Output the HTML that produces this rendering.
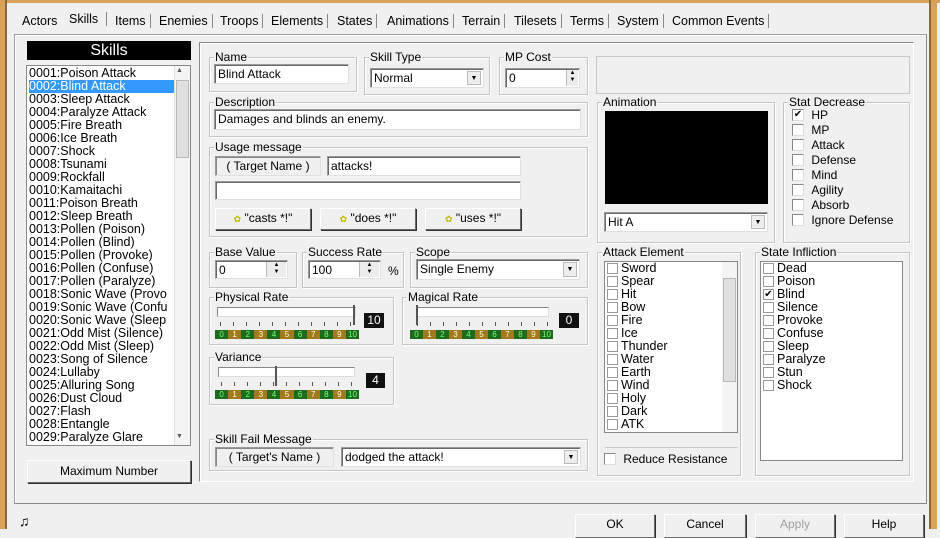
<!DOCTYPE html>
<html><head><meta charset="utf-8">
<style>
*{box-sizing:border-box;margin:0;padding:0}
body{width:940px;height:529px;overflow:hidden;background:#f0f0f0;font-family:"Liberation Sans","DejaVu Sans",sans-serif;font-size:12px;color:#000;position:relative}
.a{position:absolute}
.grp{position:absolute;border:1px solid #c4c4c4;box-shadow:inset 1px 1px 0 #fff,1px 1px 0 #fff}
.lg{position:absolute;top:-8px;left:4px;background:#f0f0f0;padding:0 1px;line-height:14px;font-size:12px}
.inp{position:absolute;background:#fff;border:1px solid #9a9a9a;border-right-color:#e0e0e0;border-bottom-color:#e0e0e0;box-shadow:inset 1px 1px 0 #696969;padding:1px 3px;line-height:16px;white-space:nowrap;overflow:hidden}
.btn{position:absolute;background:#f0f0f0;border:1px solid #fff;border-right-color:#696969;border-bottom-color:#696969;box-shadow:1px 1px 0 #333;text-align:center;line-height:19px}
.dd{position:absolute;right:2px;top:2px;bottom:2px;width:14px;background:#eee;border:1px solid #bbb;font-size:7px;text-align:center;line-height:13px}
.lst div{height:13px;line-height:13px;white-space:nowrap}
.cb{display:inline-block;width:11px;height:11px;border:1px solid #999;background:#fff;vertical-align:top;margin-top:1px;margin-right:3px;font-size:10px;line-height:9px;text-align:center;overflow:hidden}
.cb2{position:absolute;left:0;width:12px;height:12px;border:1px solid #888;border-right-color:#ddd;border-bottom-color:#ddd;background:#fff;font-size:10px;line-height:10px;text-align:center;overflow:hidden}
.sd div{position:relative;height:15px;line-height:15px;padding-left:16px}
.sd .cb2{top:1px}
.track{position:absolute;height:10px;background:#fff;border:1px solid #888;border-right-color:#ddd;border-bottom-color:#ddd}
.strip{position:absolute;height:9px;display:flex}
.strip span{flex:1;font-size:8px;line-height:9px;text-align:center;color:#7f7}
.strip span:nth-child(odd){background:#1e6b1e}
.strip span:nth-child(even){background:#a07a1c;color:#ffd}
.ticks{position:absolute;height:4px;background:repeating-linear-gradient(90deg,#555 0 1px,transparent 1px 13px)}
.val{position:absolute;background:#111;color:#fff;text-align:center;font-size:12px;line-height:14px;height:15px}
.spin{position:absolute;right:1px;top:1px;bottom:1px;width:12px;background:#ececec;font-size:6px;line-height:7px;text-align:center;border-left:1px solid #bbb}
.tab{position:absolute;top:14px;font-size:12.5px;border-right:1px solid #888;padding-right:4px}
</style></head><body>
<div class="a" style="left:0;top:0;width:940px;height:3px;background:#d9a25a"></div>
<div class="a" style="left:0;top:0;width:5px;height:529px;background:#d9a25a"></div>
<div class="a" style="left:931px;top:0;width:6px;height:529px;background:#d9a25a"></div>
<div class="a" style="left:5px;top:0;width:2px;height:529px;background:#8a6a3a"></div>
<div class="a" style="left:929px;top:0;width:2px;height:529px;background:#8a6a3a"></div>

<div class="tab" style="left:22px;border:none">Actors</div>
<div class="tab" style="left:69px;top:12px">Skills&nbsp;</div>
<div class="tab" style="left:115px">Items</div>
<div class="tab" style="left:159px">Enemies</div>
<div class="tab" style="left:220px">Troops</div>
<div class="tab" style="left:271px">Elements</div>
<div class="tab" style="left:337px">States</div>
<div class="tab" style="left:387px">Animations</div>
<div class="tab" style="left:462px">Terrain</div>
<div class="tab" style="left:514px">Tilesets</div>
<div class="tab" style="left:570px">Terms</div>
<div class="tab" style="left:617px">System</div>
<div class="tab" style="left:672px">Common Events</div>
<div class="a" style="left:14px;top:34px;width:913px;height:470px;border:1px solid #a0a0a0;border-right-color:#888;border-bottom-color:#888;box-shadow:inset 1px 1px 0 #fff"></div>

<div class="a" style="left:27px;top:41px;width:164px;height:19px;background:#000;color:#fff;text-align:center;font-size:16px;line-height:19px">Skills</div>
<div class="a lst" style="left:26px;top:65px;width:165px;height:381px;background:#fff;border:1px solid #888;padding:0 0 0 2px;font-size:12.5px">
<div style="margin-top:1px">0001:Poison Attack</div>
<div style="background:#3399ff;color:#fff;width:145px">0002:Blind Attack</div>
<div>0003:Sleep Attack</div><div>0004:Paralyze Attack</div><div>0005:Fire Breath</div><div>0006:Ice Breath</div><div>0007:Shock</div><div>0008:Tsunami</div><div>0009:Rockfall</div><div>0010:Kamaitachi</div><div>0011:Poison Breath</div><div>0012:Sleep Breath</div><div>0013:Pollen (Poison)</div><div>0014:Pollen (Blind)</div><div>0015:Pollen (Provoke)</div><div>0016:Pollen (Confuse)</div><div>0017:Pollen (Paralyze)</div><div>0018:Sonic Wave (Provo</div><div>0019:Sonic Wave (Confu</div><div>0020:Sonic Wave (Sleep</div><div>0021:Odd Mist (Silence)</div><div>0022:Odd Mist (Sleep)</div><div>0023:Song of Silence</div><div>0024:Lullaby</div><div>0025:Alluring Song</div><div>0026:Dust Cloud</div><div>0027:Flash</div><div>0028:Entangle</div><div>0029:Paralyze Glare</div>
</div>
<div class="a" style="left:174px;top:66px;width:16px;height:379px;background:#f4f4f4;border-left:1px solid #e0e0e0"></div>
<div class="a" style="left:176px;top:80px;width:13px;height:78px;background:#e0e0e0;border:1px solid #b8b8b8"></div>
<div class="a" style="left:176px;top:67px;font-size:7px;color:#555">▲</div>
<div class="a" style="left:176px;top:433px;font-size:7px;color:#555">▼</div>
<div class="btn" style="left:27px;top:460px;width:164px;height:23px;line-height:21px">Maximum Number</div>

<div class="a" style="left:199px;top:42px;width:715px;height:440px;border:1px solid #888;border-right-color:#fff;border-bottom-color:#fff;box-shadow:inset 1px 1px 0 #fff"></div>

<div class="grp" style="left:209px;top:57px;width:148px;height:35px"><span class="lg">Name</span></div>
<div class="inp" style="left:214px;top:64px;width:135px;height:20px">Blind Attack</div>
<div class="grp" style="left:364px;top:57px;width:126px;height:38px"><span class="lg">Skill Type</span></div>
<div class="inp" style="left:370px;top:68px;width:114px;height:20px">Normal<div class="dd">▼</div></div>
<div class="grp" style="left:499px;top:57px;width:89px;height:38px"><span class="lg">MP Cost</span></div>
<div class="inp" style="left:505px;top:68px;width:75px;height:20px">0<div class="spin">▲<br>▼</div></div>
<div class="a" style="left:596px;top:56px;width:314px;height:38px;border:1px solid #c8c8c8"></div>

<div class="grp" style="left:209px;top:102px;width:379px;height:35px"><span class="lg">Description</span></div>
<div class="inp" style="left:214px;top:109px;width:367px;height:21px">Damages and blinds an enemy.</div>

<div class="grp" style="left:209px;top:147px;width:379px;height:90px"><span class="lg">Usage message</span></div>
<div class="inp" style="left:215px;top:156px;width:106px;height:20px;background:#f0f0f0;box-shadow:inset 1px 1px 0 #888;text-align:center">( Target Name )</div>
<div class="inp" style="left:327px;top:156px;width:194px;height:20px">attacks!</div>
<div class="inp" style="left:215px;top:181px;width:306px;height:19px"></div>
<div class="btn" style="left:215px;top:208px;width:96px;height:22px"><span style="color:#bb0;font-size:9px">✿</span> "casts *!"</div>
<div class="btn" style="left:320px;top:208px;width:96px;height:22px"><span style="color:#bb0;font-size:9px">✿</span> "does *!"</div>
<div class="btn" style="left:425px;top:208px;width:96px;height:22px"><span style="color:#bb0;font-size:9px">✿</span> "uses *!"</div>

<div class="grp" style="left:597px;top:102px;width:178px;height:141px"><span class="lg">Animation</span></div>
<div class="a" style="left:605px;top:111px;width:163px;height:93px;background:#000"></div>
<div class="inp" style="left:604px;top:212px;width:164px;height:20px">Hit A<div class="dd">▼</div></div>

<div class="grp" style="left:783px;top:102px;width:127px;height:141px"><span class="lg">Stat Decrease</span></div>
<div class="a sd" style="left:792px;top:108px">
<div><span class="cb2">✔</span>&nbsp;HP</div><div><span class="cb2"></span>&nbsp;MP</div><div><span class="cb2"></span>&nbsp;Attack</div><div><span class="cb2"></span>&nbsp;Defense</div><div><span class="cb2"></span>&nbsp;Mind</div><div><span class="cb2"></span>&nbsp;Agility</div><div><span class="cb2"></span>&nbsp;Absorb</div><div><span class="cb2"></span>&nbsp;Ignore Defense</div>
</div>

<div class="grp" style="left:209px;top:252px;width:88px;height:36px"><span class="lg">Base Value</span></div>
<div class="inp" style="left:215px;top:260px;width:73px;height:19px">0<div class="spin" style="width:20px">▲<br>▼</div></div>
<div class="grp" style="left:302px;top:252px;width:102px;height:36px"><span class="lg">Success Rate</span></div>
<div class="inp" style="left:308px;top:260px;width:73px;height:19px">100<div class="spin" style="width:20px">▲<br>▼</div></div>
<div class="a" style="left:388px;top:264px">%</div>
<div class="grp" style="left:410px;top:252px;width:178px;height:36px"><span class="lg">Scope</span></div>
<div class="inp" style="left:416px;top:259px;width:164px;height:21px">Single Enemy<div class="dd">▼</div></div>

<div class="grp" style="left:209px;top:297px;width:185px;height:48px"><span class="lg">Physical Rate</span></div>
<div class="track" style="left:217px;top:307px;width:139px"></div>
<div class="ticks" style="left:220px;top:322px;width:134px"></div>
<div class="strip" style="left:215px;top:330px;width:144px"><span>0</span><span>1</span><span>2</span><span>3</span><span>4</span><span>5</span><span>6</span><span>7</span><span>8</span><span>9</span><span>10</span></div>
<div class="a" style="left:351px;top:305px;width:4px;height:20px;border-right:2px solid #555"></div>
<div class="val" style="left:364px;top:313px;width:20px">10</div>

<div class="grp" style="left:402px;top:297px;width:186px;height:48px"><span class="lg">Magical Rate</span></div>
<div class="track" style="left:417px;top:307px;width:132px"></div>
<div class="ticks" style="left:417px;top:322px;width:134px"></div>
<div class="strip" style="left:410px;top:330px;width:143px"><span>0</span><span>1</span><span>2</span><span>3</span><span>4</span><span>5</span><span>6</span><span>7</span><span>8</span><span>9</span><span>10</span></div>
<div class="a" style="left:416px;top:305px;width:4px;height:20px;border-left:2px solid #555"></div>
<div class="val" style="left:559px;top:313px;width:20px">0</div>

<div class="grp" style="left:209px;top:357px;width:185px;height:48px"><span class="lg">Variance</span></div>
<div class="track" style="left:218px;top:367px;width:137px"></div>
<div class="ticks" style="left:221px;top:382px;width:134px"></div>
<div class="strip" style="left:215px;top:390px;width:144px"><span>0</span><span>1</span><span>2</span><span>3</span><span>4</span><span>5</span><span>6</span><span>7</span><span>8</span><span>9</span><span>10</span></div>
<div class="a" style="left:275px;top:366px;width:4px;height:20px;border-left:2px solid #555"></div>
<div class="val" style="left:366px;top:373px;width:19px">4</div>

<div class="grp" style="left:209px;top:439px;width:379px;height:32px"><span class="lg">Skill Fail Message</span></div>
<div class="inp" style="left:215px;top:447px;width:119px;height:20px;background:#f0f0f0;box-shadow:inset 1px 1px 0 #888;text-align:center">( Target's Name )</div>
<div class="inp" style="left:341px;top:447px;width:240px;height:20px">dodged the attack!<div class="dd">▼</div></div>

<div class="grp" style="left:597px;top:252px;width:144px;height:224px"><span class="lg">Attack Element</span></div>
<div class="a lst" style="left:604px;top:261px;width:134px;height:172px;background:#fff;border:1px solid #888;padding-left:2px;font-size:12.5px">
<div><span class="cb"></span>Sword</div><div><span class="cb"></span>Spear</div><div><span class="cb"></span>Hit</div><div><span class="cb"></span>Bow</div><div><span class="cb"></span>Fire</div><div><span class="cb"></span>Ice</div><div><span class="cb"></span>Thunder</div><div><span class="cb"></span>Water</div><div><span class="cb"></span>Earth</div><div><span class="cb"></span>Wind</div><div><span class="cb"></span>Holy</div><div><span class="cb"></span>Dark</div><div><span class="cb"></span>ATK</div>
</div>
<div class="a" style="left:722px;top:262px;width:15px;height:170px;background:#f4f4f4"></div>
<div class="a" style="left:723px;top:278px;width:13px;height:104px;background:#e0e0e0;border:1px solid #b8b8b8"></div>
<div class="a" style="left:605px;top:447px;width:133px;height:1px;background:#c8c8c8"></div>
<div class="a sd" style="left:604px;top:452px"><div><span class="cb2"></span>&nbsp;Reduce Resistance</div></div>

<div class="grp" style="left:755px;top:252px;width:155px;height:224px"><span class="lg">State Infliction</span></div>
<div class="a lst" style="left:760px;top:261px;width:143px;height:200px;background:#fff;border:1px solid #888;padding-left:2px;font-size:12.5px">
<div><span class="cb"></span>Dead</div><div><span class="cb"></span>Poison</div><div><span class="cb">✔</span>Blind</div><div><span class="cb"></span>Silence</div><div><span class="cb"></span>Provoke</div><div><span class="cb"></span>Confuse</div><div><span class="cb"></span>Sleep</div><div><span class="cb"></span>Paralyze</div><div><span class="cb"></span>Stun</div><div><span class="cb"></span>Shock</div>
</div>

<div class="a" style="left:19px;top:513px;font-size:14px">♫</div>
<div class="btn" style="left:575px;top:514px;width:80px;height:24px">OK</div>
<div class="btn" style="left:664px;top:514px;width:82px;height:24px">Cancel</div>
<div class="btn" style="left:755px;top:514px;width:80px;height:24px;color:#a0a0a0">Apply</div>
<div class="btn" style="left:844px;top:514px;width:80px;height:24px">Help</div>
</body></html>
